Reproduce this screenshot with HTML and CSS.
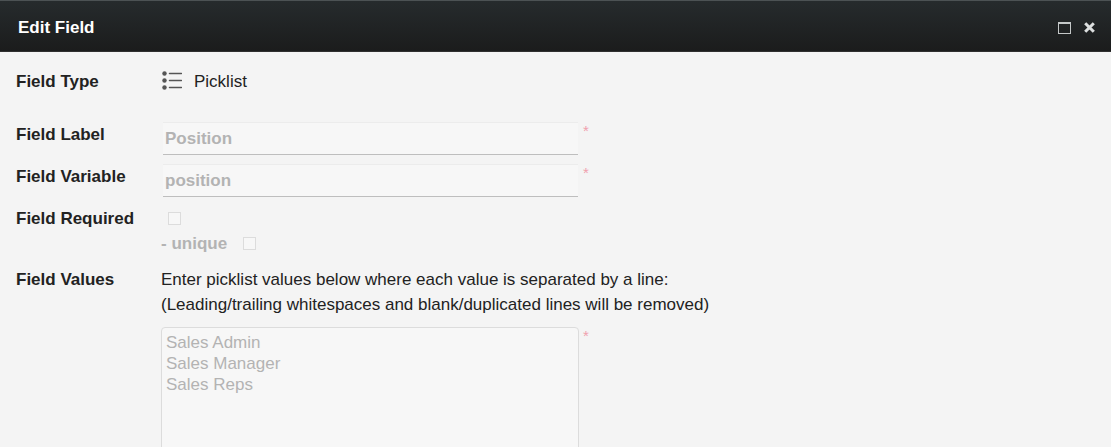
FILE: index.html
```html
<!DOCTYPE html>
<html lang="en">
<head>
<meta charset="UTF-8">
<meta name="viewport" content="width=device-width, initial-scale=1.0">
<title>Edit Field</title>
<link rel="stylesheet" href="styles.css">
</head>
<body>
  <div class="dialog">
    <header class="dialog-header">
      <h1>Edit Field</h1>
      <div class="dialog-buttons">
        <button type="button" aria-label="Maximize">
          <svg width="13" height="12" viewBox="0 0 13 12"><path d="M0 0h13v12H0zM1 2v9h11V2z" fill="#c4c8c8" fill-rule="evenodd"/></svg>
        </button>
        <button type="button" aria-label="Close">
          <svg width="11" height="11" viewBox="0 0 11 11"><path d="M1.2 1.2l8.6 8.6M9.8 1.2l-8.6 8.6" stroke="#dcdfdf" stroke-width="3"/></svg>
        </button>
      </div>
    </header>

    <form class="dialog-form">
      <div class="row row-type">
        <span class="label">Field Type</span>
        <div class="field-type">
          <svg width="20" height="20" viewBox="0 0 20 20">
            <g fill="#555"><circle cx="2.5" cy="2.5" r="2.2"/><circle cx="2.5" cy="9.5" r="2.2"/><circle cx="2.5" cy="16.5" r="2.2"/></g>
            <path d="M7.5 2.5h12M7.5 9.5h12M7.5 16.5h12" stroke="#555" stroke-width="1.5" stroke-linecap="round"/>
          </svg>
          <span>Picklist</span>
        </div>
      </div>

      <div class="row row-input">
        <label class="label" for="field-label">Field Label</label>
        <div class="control">
          <input class="text-input" type="text" id="field-label" value="Position" disabled>
          <span class="required">*</span>
        </div>
      </div>

      <div class="row row-input">
        <label class="label" for="field-variable">Field Variable</label>
        <div class="control">
          <input class="text-input" type="text" id="field-variable" value="position" disabled>
          <span class="required">*</span>
        </div>
      </div>

      <div class="row row-required">
        <label class="label" for="field-required">Field Required</label>
        <div>
          <div class="check">
            <input type="checkbox" id="field-required" disabled>
          </div>
          <div class="check">
            <label for="field-unique">- unique</label>
            <input type="checkbox" id="field-unique" disabled>
          </div>
        </div>
      </div>

      <div class="row">
        <label class="label" for="field-values">Field Values</label>
        <div>
          <p class="hint">Enter picklist values below where each value is separated by a line:<br>(Leading/trailing whitespaces and blank/duplicated lines will be removed)</p>
          <div class="control">
            <textarea class="values" id="field-values" rows="8" disabled>Sales Admin
Sales Manager
Sales Reps</textarea>
            <span class="required">*</span>
          </div>
        </div>
      </div>
    </form>
  </div>
</body>
</html>
```

FILE: styles.css
```css
body {
  margin: 0;
  font-family: "Liberation Sans", Arial, sans-serif;
  font-size: 17px;
  line-height: 25px;
  color: #222;
  background-color: #f4f4f4;
}
.dialog {
  display: flex;
  flex-direction: column;
  height: 100vh;
  overflow: hidden;
}

/* Title bar */
.dialog-header {
  display: flex;
  flex-shrink: 0;
  align-items: center;
  justify-content: space-between;
  padding: 14px 16px 11px 18px;
  border-top: 1px solid #4c5254;
  border-bottom: 1px solid #303030;
  background: linear-gradient(#262b2d, #1b1c1c);
}
.dialog-header h1 {
  margin: 0;
  font-size: 17px;
  color: #fff;
}
.dialog-buttons {
  display: flex;
  align-items: center;
  gap: 13px;
}
.dialog-buttons button {
  display: flex;
  padding: 0;
  border: none;
  background: none;
  cursor: pointer;
}

/* Form rows */
.dialog-form {
  padding: 17px 16px;
}
.row {
  display: grid;
  grid-template-columns: 145px 1fr;
  align-items: start;
}
.row-type {
  margin-bottom: 28px;
}
.row-input {
  margin-bottom: 9px;
}
.row-required {
  margin-bottom: 11px;
}
.label {
  font-weight: bold;
}
.field-type {
  display: flex;
  align-items: center;
  gap: 12px;
  padding-left: 1px;
}
.field-type svg {
  margin-bottom: 2px;
}
.control {
  display: flex;
  align-items: flex-start;
  gap: 4px;
}
.required {
  font-size: 15px;
  line-height: 18px;
  color: #f0a0ae;
}

.text-input {
  box-sizing: border-box;
  width: 415px;
  height: 33px;
  margin: 0 1px 0 2px;
  padding: 0 2px;
  border: none;
  border-top: 1px solid #ececec;
  border-bottom: 1px solid #bebebe;
  background-color: #f7f7f7;
  font: bold 17px "Liberation Sans", Arial, sans-serif;
  color: #b3b3b3;
}

.check {
  display: flex;
  align-items: center;
  gap: 9px;
  height: 25px;
  font-weight: bold;
  color: #b3b3b3;
}
.check input {
  appearance: none;
  box-sizing: border-box;
  width: 13px;
  height: 13px;
  margin: 0 7px;
  border: 1px solid #dcdcdc;
  background-color: #f7f7f7;
}

.hint {
  margin: 0 0 10px;
}
.values {
  box-sizing: border-box;
  width: 418px;
  margin: 0;
  padding: 4px;
  border: 1px solid #dcdcdc;
  border-radius: 4px;
  background-color: #f7f7f7;
  font: 17px/21px "Liberation Sans", Arial, sans-serif;
  color: #b3b3b3;
  resize: none;
}
```
